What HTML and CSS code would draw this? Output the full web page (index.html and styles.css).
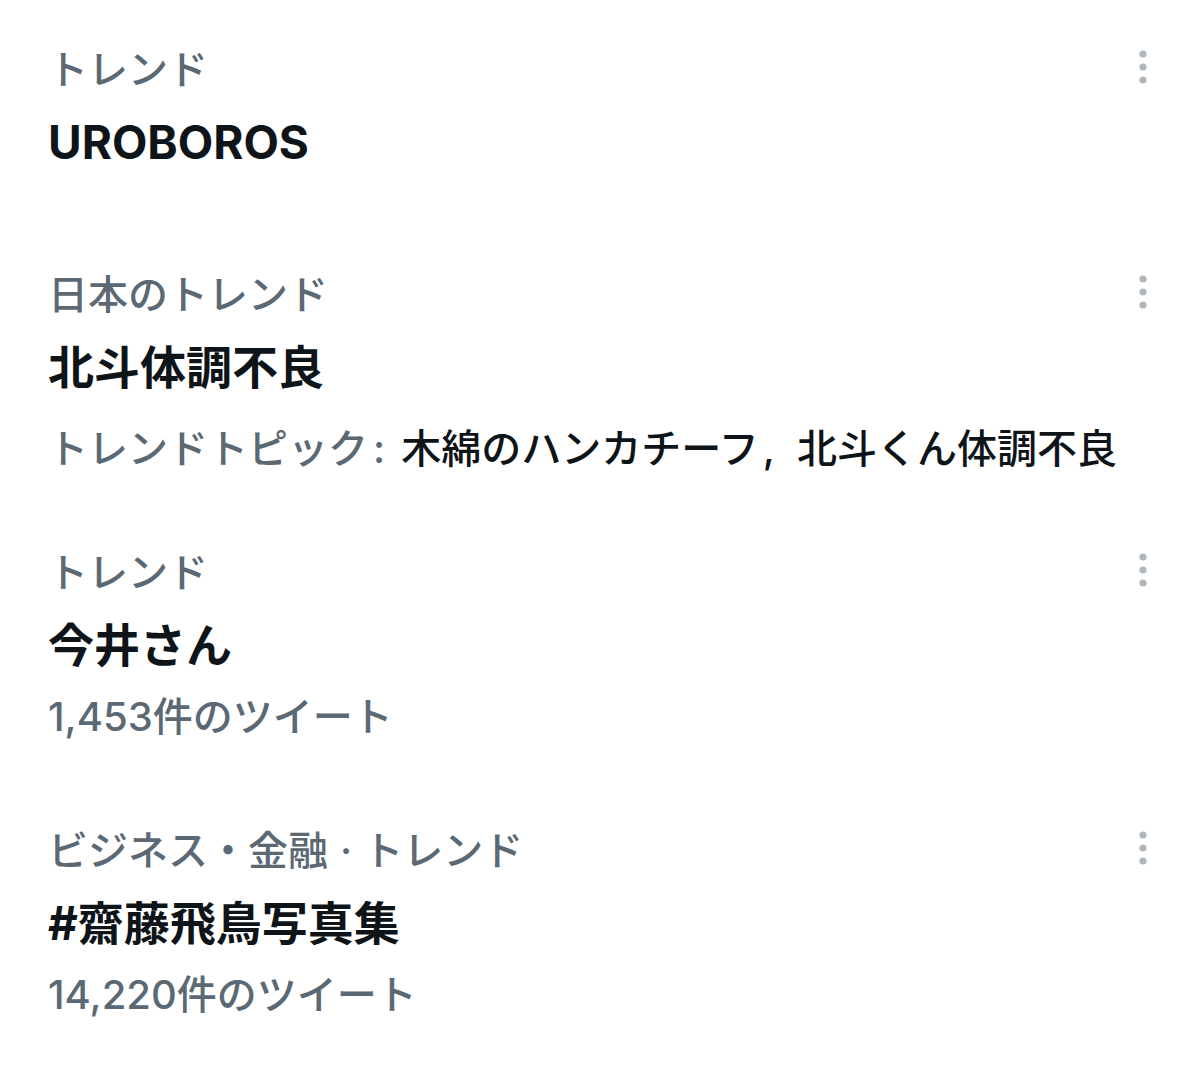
FILE: index.html
```html
<!DOCTYPE html>
<html lang="ja">
<head>
<meta charset="utf-8">
<title>トレンド</title>
<link rel="stylesheet" href="styles.css">
</head>
<body>
<main class="trends">
  <article class="trend trend--short">
    <div class="trend-body">
      <div class="trend-context">トレンド</div>
      <div class="trend-name">UROBOROS</div>
    </div>
    <button class="trend-more" aria-label="その他">
      <svg viewBox="0 0 8 34" width="8" height="34"><circle cx="4" cy="4" r="3.6"/><circle cx="4" cy="17" r="3.6"/><circle cx="4" cy="30" r="3.6"/></svg>
    </button>
  </article>

  <article class="trend trend--topics">
    <div class="trend-body">
      <div class="trend-context">日本のトレンド</div>
      <div class="trend-name">北斗体調不良</div>
      <div class="trend-meta trend-meta--topics">トレンドトピック<span class="punct punct--colon">:</span><span class="topic-list">木綿のハンカチーフ<span class="punct punct--comma">,</span>北斗くん体調不良</span></div>
    </div>
    <button class="trend-more" aria-label="その他">
      <svg viewBox="0 0 8 34" width="8" height="34"><circle cx="4" cy="4" r="3.6"/><circle cx="4" cy="17" r="3.6"/><circle cx="4" cy="30" r="3.6"/></svg>
    </button>
  </article>

  <article class="trend">
    <div class="trend-body">
      <div class="trend-context">トレンド</div>
      <div class="trend-name">今井さん</div>
      <div class="trend-meta">1,453件のツイート</div>
    </div>
    <button class="trend-more" aria-label="その他">
      <svg viewBox="0 0 8 34" width="8" height="34"><circle cx="4" cy="4" r="3.6"/><circle cx="4" cy="17" r="3.6"/><circle cx="4" cy="30" r="3.6"/></svg>
    </button>
  </article>

  <article class="trend">
    <div class="trend-body">
      <div class="trend-context">ビジネス・金融<span class="punct punct--dot">·</span>トレンド</div>
      <div class="trend-name">#齋藤飛鳥写真集</div>
      <div class="trend-meta">14,220件のツイート</div>
    </div>
    <button class="trend-more" aria-label="その他">
      <svg viewBox="0 0 8 34" width="8" height="34"><circle cx="4" cy="4" r="3.6"/><circle cx="4" cy="17" r="3.6"/><circle cx="4" cy="30" r="3.6"/></svg>
    </button>
  </article>
</main>
</body>
</html>
```
FILE: styles.css
```css
html, body {
  margin: 0;
  padding: 0;
  background: #ffffff;
}

body {
  font-family: "Inter", "Noto Sans CJK JP", sans-serif;
  color: #0f1419;
}

.trends {
  padding-top: 3px;
}

.trend {
  display: flex;
  justify-content: space-between;
  align-items: flex-start;
  padding: 31px 53px 31px 48px;
}

.trend--short {
  padding-bottom: 50px;
}

.trend--topics {
  padding-bottom: 21px;
}

.trend-body {
  display: flex;
  flex-direction: column;
}

.trend-context {
  font-size: 40px;
  line-height: 72px;
  font-weight: 500;
  color: #5b6975;
  white-space: nowrap;
}

.trend-name {
  font-size: 46px;
  line-height: 72px;
  font-weight: 700;
  color: #0f1419;
  white-space: nowrap;
}

.trend-meta {
  font-size: 40px;
  line-height: 72px;
  font-weight: 500;
  color: #5b6975;
  white-space: nowrap;
}

.trend-meta--topics {
  padding-top: 10px;
}

.topic-list {
  color: #0f1419;
}

.punct--colon {
  margin-left: 5px;
  margin-right: 16px;
}

.punct--comma {
  margin-left: 4px;
  margin-right: 22px;
}

.punct--dot {
  margin: 0 11px 0 12px;
}

.trend-more {
  display: flex;
  align-items: center;
  justify-content: center;
  height: 72px;
  padding: 0;
  border: 0;
  background: none;
  margin-top: -3px;
}

.trend-more svg {
  display: block;
  fill: #aeb6be;
}
```
